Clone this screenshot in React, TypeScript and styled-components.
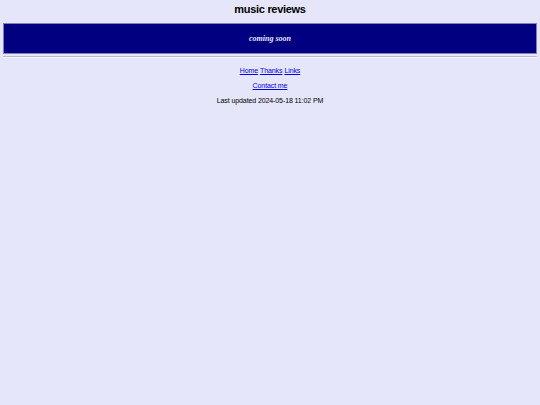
import React from 'react'
import styled, { createGlobalStyle } from 'styled-components'

const GlobalStyle = createGlobalStyle`
  html, body {
    margin: 0;
    background: #e6e6fa;
  }
  body {
    padding: 3px;
    font-family: "Liberation Sans", Arial, sans-serif;
    color: #000;
  }
`

const Page = styled.div`
  display: flex;
  flex-direction: column;
  align-items: stretch;
`

const Title = styled.h1`
  margin: 0;
  text-align: center;
  font-size: 11px;
  letter-spacing: -0.3px;
  font-weight: bold;
  line-height: 13px;
`

const Banner = styled.div`
  margin-top: 7px;
  height: 29px;
  background: #000080;
  border: 1px solid #8080c0;
  display: flex;
  align-items: center;
  justify-content: center;
`

const BannerText = styled.em`
  font-family: "Liberation Serif", "Times New Roman", serif;
  font-weight: bold;
  font-size: 8px;
  color: #e6e6fa;
`

const Rule = styled.hr`
  margin: 2px 0 0;
  border: none;
  border-top: 1px solid #b8b8c8;
  border-bottom: 1px solid #f4f4ff;
`

const Footer = styled.div`
  display: flex;
  flex-direction: column;
  align-items: center;
  gap: 5px;
  margin-top: 8px;
  font-size: 7px;
  letter-spacing: -0.1px;
  line-height: 10px;
`

const LinkRow = styled.div`
  display: flex;
  gap: 2px;
`

const Link = styled.a`
  color: #0000ee;
  text-decoration: underline;
`

export default function App() {
  return (
    <Page>
      <GlobalStyle />
      <Title>music reviews</Title>
      <Banner>
        <BannerText>coming soon</BannerText>
      </Banner>
      <Rule />
      <Footer>
        <LinkRow>
          <Link href="#">Home</Link>
          <Link href="#">Thanks</Link>
          <Link href="#">Links</Link>
        </LinkRow>
        <Link href="#">Contact me</Link>
        <div>Last updated 2024-05-18 11:02 PM</div>
      </Footer>
    </Page>
  )
}
